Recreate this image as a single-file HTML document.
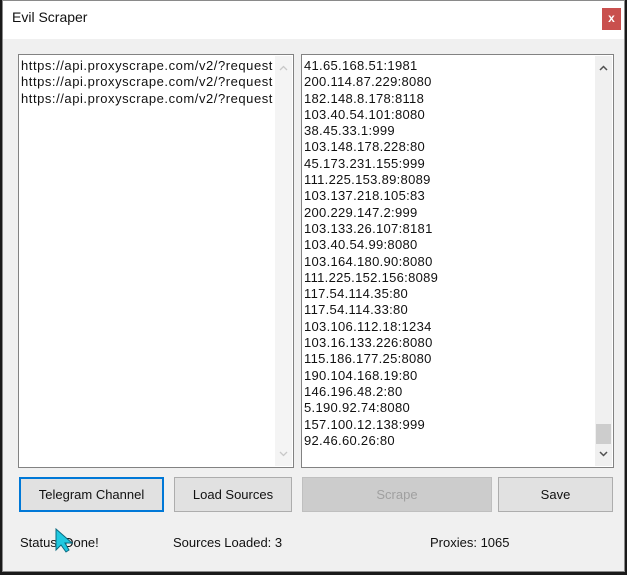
<!DOCTYPE html>
<html><head><style>
*{margin:0;padding:0;box-sizing:border-box}
body{width:627px;height:575px;background:#1a1a1a;font-family:"Liberation Sans",sans-serif;position:relative;overflow:hidden}
#win{position:absolute;left:2px;top:0;width:623px;height:572px;background:#f0f0f0;border:1px solid #8a8a8a}
#title{position:absolute;left:0;top:0;right:0;height:38px;background:#fff}
#title span{position:absolute;left:9px;top:8px;font-size:14px;color:#111}
#close{position:absolute;right:3px;top:7px;width:19px;height:22px;background:#c9504e;color:#fff;font-size:12px;text-align:center;line-height:21px;font-weight:bold}
.box{position:absolute;background:#fff;border:1px solid #828282;font-size:13px;line-height:16.3px;color:#111;overflow:hidden}
.sb{position:absolute;right:1px;top:1px;bottom:1px;width:17px;background:#f0f0f0}
.lines{position:absolute;left:2px;top:3px;white-space:pre;letter-spacing:0.3px}
.btn{position:absolute;height:35px;background:#e1e1e1;border:1px solid #adadad;font-size:13px;text-align:center;line-height:33px;color:#111}
.lbl{position:absolute;top:535px;font-size:13px;color:#111}
.arr{position:absolute;left:4px}
</style></head><body>
<div id="win">
<div id="title"><span>Evil Scraper</span><div id="close">x</div></div>
</div>
<div class="box" style="left:18px;top:54px;width:276px;height:414px">
<div class="lines" style="letter-spacing:0.55px">https://api.proxyscrape.com/v2/?request
https://api.proxyscrape.com/v2/?request
https://api.proxyscrape.com/v2/?request</div>
<div class="sb" style="background:#f4f4f4"><svg class="arr" style="top:9px" width="9" height="6"><path d="M1 5 L4.5 1.5 L8 5" fill="none" stroke="#c8c8c8" stroke-width="1.3"/></svg><svg class="arr" style="bottom:9px" width="9" height="6"><path d="M1 1 L4.5 4.5 L8 1" fill="none" stroke="#c8c8c8" stroke-width="1.3"/></svg></div>
</div>
<div class="box" style="left:301px;top:54px;width:313px;height:414px">
<div class="lines">41.65.168.51:1981
200.114.87.229:8080
182.148.8.178:8118
103.40.54.101:8080
38.45.33.1:999
103.148.178.228:80
45.173.231.155:999
111.225.153.89:8089
103.137.218.105:83
200.229.147.2:999
103.133.26.107:8181
103.40.54.99:8080
103.164.180.90:8080
111.225.152.156:8089
117.54.114.35:80
117.54.114.33:80
103.106.112.18:1234
103.16.133.226:8080
115.186.177.25:8080
190.104.168.19:80
146.196.48.2:80
5.190.92.74:8080
157.100.12.138:999
92.46.60.26:80</div>
<div class="sb"><svg class="arr" style="top:9px" width="9" height="6"><path d="M1 5 L4.5 1.5 L8 5" fill="none" stroke="#505050" stroke-width="1.5"/></svg><div style="position:absolute;left:1px;right:1px;top:368px;height:20px;background:#cdcdcd"></div><svg class="arr" style="bottom:9px" width="9" height="6"><path d="M1 1 L4.5 4.5 L8 1" fill="none" stroke="#505050" stroke-width="1.5"/></svg></div>
</div>
<div class="btn" style="left:19px;top:477px;width:145px;border:2px solid #0078d7;line-height:31px">Telegram Channel</div>
<div class="btn" style="left:174px;top:477px;width:118px">Load Sources</div>
<div class="btn" style="left:302px;top:477px;width:190px;background:#cccccc;border-color:#bfbfbf;color:#a0a0a0">Scrape</div>
<div class="btn" style="left:498px;top:477px;width:115px">Save</div>
<div class="lbl" style="left:20px">Status: Done!</div>
<div class="lbl" style="left:173px">Sources Loaded: 3</div>
<div class="lbl" style="left:430px">Proxies: 1065</div>
<svg style="position:absolute;left:55px;top:528px" width="20" height="26"><path d="M1 1 L1 22 L6 17 L11 24 L14 22 L10 15 L17 15 Z" fill="#1fc8e0" stroke="#0a6a80" stroke-width="1"/></svg>
</body></html>
